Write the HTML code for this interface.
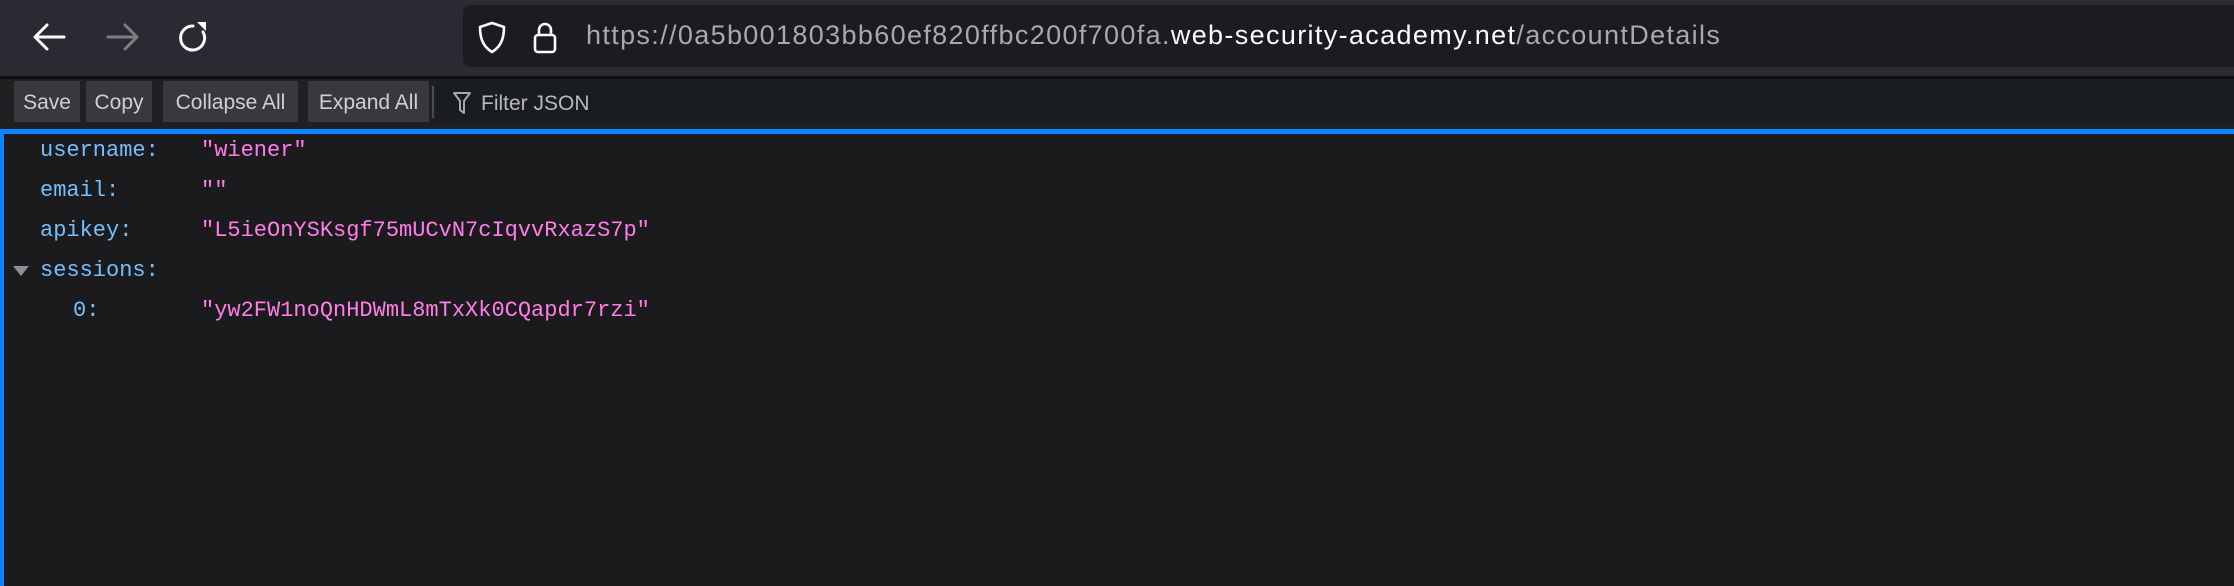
<!DOCTYPE html>
<html><head><style>
*{margin:0;padding:0;box-sizing:border-box}
body{width:2234px;height:586px;background:#1b1b1d;overflow:hidden;font-family:"Liberation Sans",sans-serif;position:relative}
.top{position:absolute;left:0;top:0;width:2234px;height:76px;background:#2b2a33}
.url{position:absolute;left:463px;top:5px;right:0;height:62px;background:#1c1b22;border-radius:8px 0 0 8px}
.urltext{position:absolute;left:586px;top:20px;font-size:27px;color:#a8a8ae;white-space:nowrap;letter-spacing:1.35px}
.urltext b{font-weight:normal;color:#fbfbfe}
.sep{position:absolute;left:0;top:76px;width:2234px;height:3px;background:#0f0f11}
.jt{position:absolute;left:0;top:79px;width:2234px;height:50px;background:#202022}
.jtf{position:absolute;left:436px;top:80px;right:0;height:43px;background:#1a1d1f}
.btn{position:absolute;top:81px;height:41px;background:#38383d;color:#d0d0d4;font-size:21px;line-height:43px;text-align:center}
.blue{position:absolute;left:0;top:129px;width:2234px;height:5px;background:#0a84ff}
.lb{position:absolute;left:0;top:129px;width:4px;height:457px;background:#0a84ff}
.row{position:absolute;font-family:"Liberation Mono",monospace;font-size:22px;white-space:nowrap;line-height:30px}
.k{color:#75bfff}.v{color:#ff7de9}
</style></head><body>
<div class="top"></div>
<svg style="position:absolute;left:30px;top:20px" width="200" height="36" viewBox="0 0 200 36">
<g fill="none" stroke="#fbfbfe" stroke-width="3" stroke-linecap="round" stroke-linejoin="round">
<path d="M34 17H6M17 5L5 17l12 12"/>
</g>
<g fill="none" stroke="#7d7c82" stroke-width="3" stroke-linecap="round" stroke-linejoin="round">
<path d="M78 17h28M95 5l12 12-12 12"/>
</g>
<g fill="none" stroke="#fbfbfe" stroke-width="3" stroke-linecap="round">
<path d="M163 6a12 12 0 1 0 10 6"/>
</g>
<path d="M167 2l9 0 0 9z" fill="#fbfbfe"/>
</svg>
<div class="url"></div>
<svg style="position:absolute;left:478px;top:20px" width="90" height="36" viewBox="0 0 90 36">
<path d="M14 3 L26 7 C26 20 22 27 14 32 C6 27 2 20 2 7 Z" fill="none" stroke="#fbfbfe" stroke-width="2.6" stroke-linejoin="round"/>
<rect x="57" y="15" width="20" height="17" rx="3" fill="none" stroke="#fbfbfe" stroke-width="2.6"/>
<path d="M61 15V10a6 6 0 0 1 12 0v5" fill="none" stroke="#fbfbfe" stroke-width="2.6"/>
</svg>
<div class="urltext">https://0a5b001803bb60ef820ffbc200f700fa.<b>web-security-academy.net</b>/accountDetails</div>
<div class="sep"></div>
<div class="jt"></div>
<div class="jtf"></div>
<div class="btn" style="left:14px;width:66px">Save</div>
<div class="btn" style="left:86px;width:66px">Copy</div>
<div class="btn" style="left:163px;width:135px">Collapse All</div>
<div class="btn" style="left:308px;width:121px">Expand All</div>
<div style="position:absolute;left:432px;top:86px;width:2px;height:32px;background:#4a4a4f"></div>
<svg style="position:absolute;left:452px;top:91px" width="20" height="24" viewBox="0 0 20 24"><path d="M2 2h16l-6 8v12l-4-3V10z" fill="none" stroke="#a8a8ae" stroke-width="2" stroke-linejoin="round"/></svg>
<div style="position:absolute;left:481px;top:82px;line-height:43px;font-size:21px;color:#b8b8bc">Filter JSON</div>
<div class="blue"></div>
<div class="lb"></div>
<div class="row k" style="left:40px;top:136px">username:</div><div class="row v" style="left:201px;top:136px">"wiener"</div>
<div class="row k" style="left:40px;top:176px">email:</div><div class="row v" style="left:201px;top:176px">""</div>
<div class="row k" style="left:40px;top:216px">apikey:</div><div class="row v" style="left:201px;top:216px">"L5ieOnYSKsgf75mUCvN7cIqvvRxazS7p"</div>
<svg style="position:absolute;left:13px;top:265px" width="16" height="12"><path d="M0 1h16L8 11z" fill="#8e8e93"/></svg>
<div class="row k" style="left:40px;top:256px">sessions:</div>
<div class="row k" style="left:73px;top:296px">0:</div><div class="row v" style="left:201px;top:296px">"yw2FW1noQnHDWmL8mTxXk0CQapdr7rzi"</div>
</body></html>
